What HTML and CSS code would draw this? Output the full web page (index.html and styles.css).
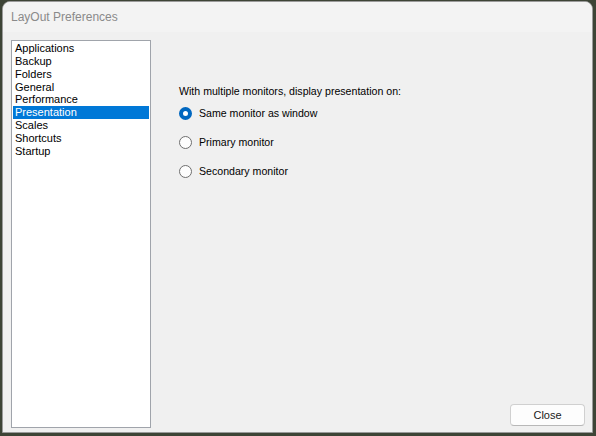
FILE: index.html
```html
<!DOCTYPE html>
<html>
<head>
<meta charset="utf-8">
<link rel="stylesheet" href="styles.css">
</head>
<body>
<div class="window">
  <div class="titlebar">LayOut Preferences</div>
  <div class="content">
    <ul class="list">
      <li>Applications</li>
      <li>Backup</li>
      <li>Folders</li>
      <li>General</li>
      <li>Performance</li>
      <li class="sel">Presentation</li>
      <li>Scales</li>
      <li>Shortcuts</li>
      <li>Startup</li>
    </ul>
    <div class="panel">
      <div class="prompt">With multiple monitors, display presentation on:</div>
      <div class="radios">
        <label class="radio"><span class="dot checked"></span>Same monitor as window</label>
        <label class="radio"><span class="dot"></span>Primary monitor</label>
        <label class="radio"><span class="dot"></span>Secondary monitor</label>
      </div>
      <div class="spacer"></div>
      <div class="buttons"><button class="btn">Close</button></div>
    </div>
  </div>
</div>
</body>
</html>
```
FILE: styles.css
```css
html, body { margin: 0; padding: 0; }
body {
  width: 596px; height: 436px;
  background: #3d4436;
  padding: 1px 0 0 2px;
  box-sizing: border-box;
  font-family: "Liberation Sans", Arial, sans-serif;
}
.window {
  width: 591px; height: 432px;
  background: #f0f0f0;
  border: 1px solid #9a9a9a;
  border-radius: 8px 8px 0 0;
  box-sizing: border-box;
  display: flex; flex-direction: column;
  overflow: hidden;
}
.titlebar {
  height: 30px;
  background: #f3f3f3;
  color: #8a8a8a;
  font-family: "Liberation Sans", Arial, sans-serif;
  font-size: 12px;
  line-height: 30px;
  padding-left: 8px;
  flex: none;
}
.content {
  flex: 1;
  display: flex;
  padding: 8px 6px 4px 8px;
  min-height: 0;
}
.list {
  list-style: none;
  margin: 0; padding: 1px;
  width: 140px;
  box-sizing: border-box;
  background: #fff;
  border: 1px solid #a0a4ab;
  font-size: 11px;
  color: #000;
}
.list li {
  height: 12.85px; line-height: 12.85px;
  padding-left: 2px;
}
.list li.sel { background: #0078d7; color: #fff; }
.panel {
  flex: 1;
  display: flex; flex-direction: column;
  padding: 45px 0 0 28px;
  font-size: 10.6px;
  color: #000;
}
.prompt { height: 13px; line-height: 13px; }
.radios { display: flex; flex-direction: column; gap: 16px; margin-top: 9px; }
.radio {
  display: flex; align-items: center;
  height: 13px; line-height: 13px;
  font-size: 10.6px;
}
.dot {
  width: 13px; height: 13px;
  box-sizing: border-box;
  border: 1px solid #6f6f6f;
  border-radius: 50%;
  background: #fdfdfd;
  margin-right: 7px;
  flex: none;
}
.dot.checked {
  background: #fff;
  border: 4px solid #0067c0;
}
.spacer { flex: 1; }
.buttons { display: flex; justify-content: flex-end; margin-bottom: 2px; }
.btn {
  width: 75px; height: 22px;
  background: #fdfdfd;
  border: 1px solid #d0d0d0;
  border-bottom-color: #b8b8b8;
  border-radius: 4px;
  font-family: "Liberation Sans", Arial, sans-serif;
  font-size: 11px;
  color: #1a1a1a;
  padding: 0;
  margin-right: 1px;
}
```
